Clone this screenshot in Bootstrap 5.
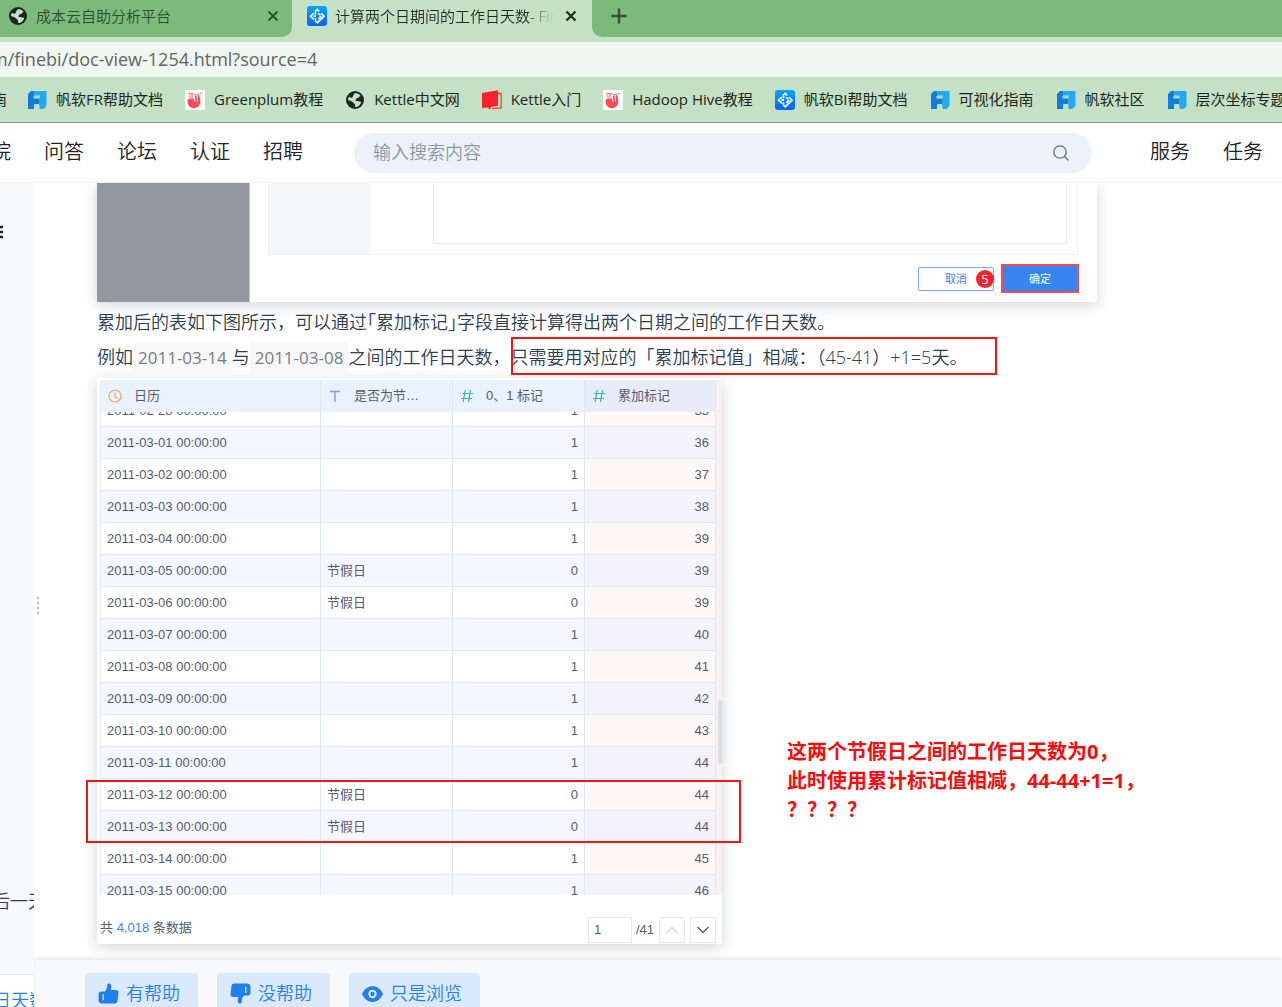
<!DOCTYPE html>
<html lang="zh-CN">
<head>
<meta charset="utf-8">
<meta name="viewport" content="width=device-width, initial-scale=1">
<title>计算两个日期间的工作日天数- FineBI</title>
<link href="https://cdn.jsdelivr.net/npm/bootstrap@5.3.0/dist/css/bootstrap.min.css" rel="stylesheet">
<style>
body{font-family:"Open Sans","Noto Sans CJK SC",sans-serif;font-weight:350;color:#2c3e50;background:#fff}
a{text-decoration:none;color:inherit}
.tabstrip{height:42px;background:#c5e1c5;font-size:15px;color:#1f2a20}
.tab-side{height:37px;background:#7abb7b}
.tab-idle{width:292px;border-bottom-right-radius:10px;color:#2f4a31;padding:0 12px 5px 8px}
.tab-rest{border-bottom-left-radius:10px;padding:0 18px 5px}
.tab-live{width:300px;height:37px;padding:0 14px 5px 15px}
.tab-title{width:219px;white-space:nowrap;overflow:hidden;-webkit-mask-image:linear-gradient(90deg,#000 90%,transparent);mask-image:linear-gradient(90deg,#000 90%,transparent)}
.tab-live svg{flex:none}
.plain{display:block;background:none;border:0;padding:0;line-height:0;color:inherit}
.addr{height:35px;background:#f0f7f0;font-size:18px;font-weight:400;color:#5f6661}
.addr input{background:none;border:0;padding:0;margin-left:-9px;width:100%;color:inherit;outline:0}
.marks{height:46px;background:#c5e1c5;border-bottom:1px solid #86a286;font-size:15px;font-weight:400;color:#1c261d;gap:22px;white-space:nowrap}
.marks a{gap:9px;flex:none}
.marks a:first-child{margin-left:-8px;margin-right:-2px}
.marks svg{flex:none}
.site{height:60px;border-bottom:1px solid #ebf1f8;font-size:20px;color:#222;background:#fff;padding-right:19px}
.links{gap:33px;padding-bottom:2px;white-space:nowrap}
.links-main{margin-left:-9px;margin-right:51px}
.links-user{margin-left:58px}
.search{height:40px;border-radius:20px;background:#edf2fa;padding:0 22px 0 19px}
.search input{background:none;border:0;outline:0;font-size:18px;font-weight:350;padding:0}
.search input::placeholder{color:#8796ab;opacity:1}
.side{width:34px;background:#f7f9fd;font-size:18px;white-space:nowrap}
.side-menu{padding-top:42px}
.side-item{margin-left:-8px;line-height:30px;margin-bottom:58px}
.side-now{margin-left:-7px;color:#1e80e8;line-height:30px;padding-top:10px}
.side-foot{height:33px;background:#fff;border-top:1px solid #e6e9ee}
.grip{width:12px;padding-top:68px}
.article{padding-left:51px}
.canvas{width:1000px;max-width:100%}
.lifted{background:#fff;box-shadow:0 3px 14px rgba(30,40,50,.2)}
.shot{height:119px}
.shot-mask{width:153px;background:#92969f;border-right:1px solid #c9cbd0}
.shot-panel{height:72px;margin:0 19px 0 18px;border:1px solid #eff0f2;border-top:0}
.shot-list{width:101px;background:#f5f6f8}
.shot-box{height:61px;margin:0 10px 0 63px;border:1px solid #e8e9eb;border-top:0}
.shot-actions{gap:7px;padding:9px 18px 0 0}
.shot-btn{display:block;font-size:11px;font-weight:400;line-height:1;padding:0}
.btn-no{width:76px;height:24px;border:1px solid #78aaf5;border-radius:2px;background:#fff;color:#3f82ee}
.btn-ok{width:78px;height:29px;border:2px solid #ef4b50;background:#3685f2;color:#fff}
.step{width:18px;height:18px;border-radius:9px;background:#f5222d;color:#fff;font-size:13px;font-weight:400;line-height:18px;text-align:center;right:0;top:3px}
.copy{font-size:18px;line-height:35px;margin:3px 0;white-space:nowrap}
.copy p{margin:0}
.quo{font-feature-settings:"halt"}
.datecode{font-family:"Open Sans",sans-serif;font-size:17px;font-weight:400;color:#757d86;background:#f8f8f8;padding:4px 5px}
.sheet{width:625px;height:566px;padding:2px 0 0 3px;font-size:13px;font-weight:400;color:#545b6b;font-family:"Liberation Sans","Noto Sans CJK SC",sans-serif}
.viewport{height:515px;overflow:hidden}
.data{width:616px;table-layout:fixed;border-collapse:separate;border-spacing:0}
.data th,.data td{height:32px;padding:0 6px;border-right:1px solid #dbe8fb;border-bottom:1px solid #dbe8fb;line-height:18px;font-weight:400}
.data th{position:sticky;top:0;background:#e9f2fe;border-bottom-color:#e9f2fe;z-index:1}
.data td:first-child,.data th:first-child{border-left:1px solid #e3ecf8}
.data tbody tr:nth-child(even) td{background:#f4f8fe}
.data td:nth-child(n+3){text-align:right}
.data td:nth-child(4){background:#fff8f8}
.data tbody tr:nth-child(even) td:nth-child(4){background:#f4f3f9}
.data th:nth-child(4){background:#e9ecf8}
.data th svg{margin-right:12px;margin-left:1px}
.rail{width:6px;background:#f7f1f2}
.thumb{width:4px;height:64px;border-radius:2px;background:#dedde2;margin-top:320px}
.pager{height:49px;padding:12px 6px 0 0}
.pager input,.pager button{height:26px;border:1px solid #e6e8ec;background:#fff;color:#545b6b;padding:0 5px}
.pager input{width:44px}
.pager button{width:26px;line-height:0;margin-left:5px}
.frame{position:absolute;border:2px solid #f41414;pointer-events:none}
.frame-a{left:414px;top:154px;width:486px;height:38px}
.frame-b{left:-11px;top:597px;width:655px;height:63px}
.note{position:absolute;left:690px;top:554px;font-size:20px;line-height:29px;font-weight:700;color:#f90b0b;white-space:nowrap}
.votes{height:47px;background:#f7f9fd;padding:13px 0 0 50px;gap:19px;box-shadow:0 -2px 4px rgba(0,0,0,.1);margin-left:1px}
.vote{height:44px;background:#dbe9fd;color:#1e80e8;font-size:18px;font-weight:350;border:0;border-radius:4px;padding:0 18px 3px 13px;gap:7px}
</style>
<script src="https://cdn.jsdelivr.net/npm/bootstrap@5.3.0/dist/js/bootstrap.bundle.min.js"></script>
</head>
<body>
<svg width="0" height="0" class="position-absolute" aria-hidden="true">
<defs>
<linearGradient id="bl" x1="0" y1="0" x2="0" y2="1"><stop offset="0" stop-color="#05a5ff"/><stop offset="1" stop-color="#0a62ff"/></linearGradient>
<symbol id="globe" viewBox="0 0 20 20"><circle cx="10" cy="10" r="9" fill="#1f2421"/><path d="M10 3.300c2.500-.6 4.500.8 5.600 2.700-1.200.2-1.600 1.800-3 2-1.300.2-1.300 1.200-2 1.800-.6.500.2 1.400 1.600 1.300 2-.1 2.800 1 4 1-.5 2.600-2.500 4.600-5 5-1.300.2-1.300-1-1.200-2 .2-1.500-1.200-1.500-1.800-2.600C7 11.200 5 10.500 3 10c0-1.500.4-2.400 1-3.300 1.300 1 2.500 1.500 3.500.6C8.500 6.400 8 4 10 3.300z" fill="#c5e1c5"/></symbol>
<symbol id="bi" viewBox="0 0 20 20"><rect width="20" height="20" rx="3" fill="url(#bl)"/><path d="M8.500 8.500V5L10.200 3.400 12.200 5.400M6.800 7 3.600 10.200 6.800 13.400M6.500 10.200H9M11.300 7.400 13.300 9.200M14.200 7.400 17 10.200 10.300 16.800 8.500 15V12.200M11.400 12.800 14 10.200" fill="none" stroke="#fff" stroke-width="1.700"/></symbol>
<symbol id="fr" viewBox="0 0 20 20"><path d="M4 1H7.500V19H1V4z" fill="#0a80dc"/><path d="M7.500 1H19.500V16L16.500 19H12.500V6.500H7.500z" fill="#22aaf0"/><path d="M6.500 8.500h6V15H8v4H4v-9z" fill="#0a80dc"/><path d="M7 8.500V6h6M7.500 19v-4.500h4.500" fill="none" stroke="#c5e1c5" stroke-width="1"/></symbol>
<symbol id="gp" viewBox="0 0 20 20"><rect width="20" height="20" fill="#fff"/><path d="M2.500 10C4 8 6 9 8 8.300c1 0 1 1.500 1.300 3 .3 1 1 .8 1-.2l-.3-4.800c.2-1.500 1.500-1.500 1.700 0l.3 5c.3.8 1 .7 1-.1l-.2-5.500c.5-1 1.600-.6 1.700.4l.8 4c.5 4-1.800 7.700-5.800 8.200C5.500 18.600 2 15 2.500 10z" fill="#fa4a55"/><circle cx="6" cy="6" r="2.600" fill="#fcaab0"/><path d="M3 3.500h5l3 1.500 6.500-2" fill="none" stroke="#fb8088" stroke-width="1"/><circle cx="5.500" cy="5.800" r=".7" fill="#fff"/></symbol>
<symbol id="bk" viewBox="0 0 20 20"><path d="M0 3 16 .3v15.500L9 17l-1 3-2-2.500-6 .5z" fill="#fa202c"/><path d="M16 3.500h3.200V18l-9.200.7" fill="none" stroke="#f23a40" stroke-width="1.300"/></symbol>
<symbol id="hash" viewBox="0 0 14 14"><path d="M5.200 1 3.200 13M10.500 1l-2 12M2 4.500h11M1 9.500h11" fill="none" stroke="#35b8a8" stroke-width="1.200"/></symbol>
<symbol id="up" viewBox="0 0 20 20"><path d="M6.500 8C8.500 6.500 8.600 4.500 8.800 2.200 9-.3 12.300-.3 12.600 2.500c.1 1.600-.2 3-.5 4.200H17c1.800 0 2.700 1.200 2.500 2.800L18.600 17c-.3 1.700-1 2.500-2.600 2.500H4C1.500 19.500.5 18.500.5 16v-5c0-2 1-3 3-3z" fill="#1e80e8"/><path d="M5 10.500v6" stroke="#dbe9fd" stroke-width="1.200"/></symbol>
</defs>
</svg>

<div class="vh-100 d-flex flex-column overflow-hidden">
<header class="flex-shrink-0">
  <div class="tabstrip d-flex">
    <div class="tab-side tab-idle d-flex align-items-center">
      <svg width="20" height="20" class="me-2"><use href="#globe"/></svg><span class="flex-grow-1">成本云自助分析平台</span>
      <button class="plain" aria-label="关闭标签页"><svg width="14" height="14" viewBox="0 0 14 14"><path d="M2.500 2.500l9 9M11.500 2.500l-9 9" stroke="currentColor" stroke-width="1.800"/></svg></button>
    </div>
    <div class="tab-live d-flex align-items-center">
      <svg width="20" height="20"><use href="#bi"/></svg><span class="tab-title ms-2">计算两个日期间的工作日天数- FineBI</span>
      <button class="plain ms-auto" aria-label="关闭标签页"><svg width="14" height="14" viewBox="0 0 14 14"><path d="M2.500 2.500l9 9M11.500 2.500l-9 9" stroke="currentColor" stroke-width="2.200"/></svg></button>
    </div>
    <div class="tab-side tab-rest flex-grow-1 d-flex align-items-center">
      <button class="plain" aria-label="新标签页"><svg width="18" height="18" viewBox="0 0 18 18"><path d="M9 1.500v15M1.500 9h15" stroke="#35503a" stroke-width="2.400"/></svg></button>
    </div>
  </div>
  <div class="addr d-flex align-items-center overflow-hidden"><input type="text" aria-label="地址" value="m/finebi/doc-view-1254.html?source=4"></div>
  <nav class="marks d-flex align-items-center overflow-hidden" aria-label="书签">
    <a href="#">南</a>
    <a href="#" class="d-flex align-items-center"><svg width="20" height="20"><use href="#fr"/></svg>帆软FR帮助文档</a>
    <a href="#" class="d-flex align-items-center"><svg width="20" height="20"><use href="#gp"/></svg>Greenplum教程</a>
    <a href="#" class="d-flex align-items-center"><svg width="20" height="20"><use href="#globe"/></svg>Kettle中文网</a>
    <a href="#" class="d-flex align-items-center"><svg width="20" height="20"><use href="#bk"/></svg>Kettle入门</a>
    <a href="#" class="d-flex align-items-center"><svg width="20" height="20"><use href="#gp"/></svg>Hadoop Hive教程</a>
    <a href="#" class="d-flex align-items-center"><svg width="20" height="20"><use href="#bi"/></svg>帆软BI帮助文档</a>
    <a href="#" class="d-flex align-items-center"><svg width="20" height="20"><use href="#fr"/></svg>可视化指南</a>
    <a href="#" class="d-flex align-items-center"><svg width="20" height="20"><use href="#fr"/></svg>帆软社区</a>
    <a href="#" class="d-flex align-items-center"><svg width="20" height="20"><use href="#fr"/></svg>层次坐标专题</a>
  </nav>
  <div class="site d-flex align-items-center overflow-hidden">
    <nav class="links links-main d-flex"><a href="#">院</a><a href="#">问答</a><a href="#">论坛</a><a href="#">认证</a><a href="#">招聘</a></nav>
    <form class="search d-flex align-items-center flex-grow-1">
      <input class="flex-grow-1" type="text" placeholder="输入搜索内容" aria-label="搜索">
      <button type="button" class="plain" aria-label="搜索"><svg width="18" height="18" viewBox="0 0 18 18" fill="none" stroke="#5d6f86" stroke-width="1.300"><circle cx="8" cy="8" r="6.200"/><path d="M12.500 12.500l4 4"/></svg></button>
    </form>
    <nav class="links links-user d-flex"><a href="#">服务</a><a href="#">任务</a></nav>
  </div>
</header>

<div class="flex-grow-1 d-flex overflow-hidden">
  <aside class="side flex-shrink-0 d-flex flex-column overflow-hidden">
    <div class="side-menu flex-grow-1"><button class="plain" aria-label="目录"><svg width="4" height="14" viewBox="0 0 4 14"><path d="M0 2h3M0 7h3M0 12h3" stroke="#222" stroke-width="2.400"/></svg></button></div>
    <a href="#" class="side-item">后一天</a>
    <div class="side-foot"><a href="#" class="side-now d-block">日天数</a></div>
  </aside>
  <div class="flex-grow-1 d-flex flex-column overflow-hidden">
    <div class="flex-grow-1 d-flex overflow-hidden">
      <div class="grip flex-shrink-0 d-flex align-items-center"><svg width="6" height="20" viewBox="0 0 6 20" fill="#b5b9c0"><circle cx="4" cy="2" r="1.200"/><circle cx="4" cy="7" r="1.200"/><circle cx="4" cy="12" r="1.200"/><circle cx="4" cy="17" r="1.200"/></svg></div>
      <main class="article flex-grow-1">
        <div class="canvas position-relative">
          <div class="shot lifted d-flex">
            <div class="shot-mask"></div>
            <div class="flex-grow-1">
              <div class="shot-panel d-flex"><div class="shot-list"></div><div class="shot-box flex-grow-1"></div></div>
              <div class="shot-actions d-flex justify-content-end align-items-center">
                <div class="position-relative"><button class="shot-btn btn-no">取消</button><span class="step position-absolute">5</span></div>
                <button class="shot-btn btn-ok">确定</button>
              </div>
            </div>
          </div>
          <div class="copy">
            <p>累加后的表如下图所示，可以通过<span class="quo">「累加标记」</span>字段直接计算得出两个日期之间的工作日天数。</p>
            <p>例如<span class="datecode">2011-03-14</span>与<span class="datecode">2011-03-08</span>之间的工作日天数，只需要用对应的「累加标记值」相减：（45-41）+1=5天。</p>
          </div>
          <div class="sheet lifted">
            <div class="d-flex viewport">
              <div class="viewport" id="rows">
              <table class="data">
                <colgroup><col style="width:221px"><col style="width:132px"><col style="width:132px"><col style="width:131px"></colgroup>
                <thead><tr>
                  <th scope="col"><svg width="14" height="14" viewBox="0 0 14 14" fill="none" stroke="#f5a860" stroke-width="1.200"><circle cx="7" cy="7" r="6"/><path d="M7 3.500V7.500l2.500 2"/></svg>日历</th>
                  <th scope="col"><svg width="14" height="14" viewBox="0 0 14 14"><path d="M2 2.500h10M7 2.500V13" stroke="#7c9cf2" stroke-width="1.400"/></svg>是否为节…</th>
                  <th scope="col"><svg width="14" height="14"><use href="#hash"/></svg>0、1 标记</th>
                  <th scope="col"><svg width="14" height="14"><use href="#hash"/></svg>累加标记</th>
                </tr></thead>
                <tbody>
                  <tr><td>2011-02-28 00:00:00</td><td></td><td>1</td><td>35</td></tr>
                  <tr><td>2011-03-01 00:00:00</td><td></td><td>1</td><td>36</td></tr>
                  <tr><td>2011-03-02 00:00:00</td><td></td><td>1</td><td>37</td></tr>
                  <tr><td>2011-03-03 00:00:00</td><td></td><td>1</td><td>38</td></tr>
                  <tr><td>2011-03-04 00:00:00</td><td></td><td>1</td><td>39</td></tr>
                  <tr><td>2011-03-05 00:00:00</td><td>节假日</td><td>0</td><td>39</td></tr>
                  <tr><td>2011-03-06 00:00:00</td><td>节假日</td><td>0</td><td>39</td></tr>
                  <tr><td>2011-03-07 00:00:00</td><td></td><td>1</td><td>40</td></tr>
                  <tr><td>2011-03-08 00:00:00</td><td></td><td>1</td><td>41</td></tr>
                  <tr><td>2011-03-09 00:00:00</td><td></td><td>1</td><td>42</td></tr>
                  <tr><td>2011-03-10 00:00:00</td><td></td><td>1</td><td>43</td></tr>
                  <tr><td>2011-03-11 00:00:00</td><td></td><td>1</td><td>44</td></tr>
                  <tr><td>2011-03-12 00:00:00</td><td>节假日</td><td>0</td><td>44</td></tr>
                  <tr><td>2011-03-13 00:00:00</td><td>节假日</td><td>0</td><td>44</td></tr>
                  <tr><td>2011-03-14 00:00:00</td><td></td><td>1</td><td>45</td></tr>
                  <tr><td>2011-03-15 00:00:00</td><td></td><td>1</td><td>46</td></tr>
                </tbody>
              </table>
              </div>
              <div class="rail d-flex justify-content-end"><div class="thumb"></div></div>
            </div>
            <div class="pager d-flex align-items-center mt-1">
              <span class="me-auto pb-1">共 <span style="color:#3f82ee">4,018</span> 条数据</span>
              <input type="text" value="1" aria-label="页码"><span class="ms-1">/41</span>
              <button aria-label="上一页"><svg width="14" height="10" viewBox="0 0 14 10" fill="none" stroke="#cfd4dc" stroke-width="1.300"><path d="M1.500 8 7 2.500 12.500 8"/></svg></button>
              <button aria-label="下一页"><svg width="14" height="10" viewBox="0 0 14 10" fill="none" stroke="#545b6b" stroke-width="1.300"><path d="M1.500 2 7 7.500 12.500 2"/></svg></button>
            </div>
          </div>
          <div class="frame frame-a"></div>
          <div class="frame frame-b"></div>
          <div class="note">这两个节假日之间的工作日天数为0，<br>此时使用累计标记值相减，44-44+1=1，<br>？？？？</div>
        </div>
      </main>
    </div>
    <div class="votes d-flex flex-shrink-0 position-relative">
      <button class="vote d-flex align-items-center"><svg width="21" height="21"><use href="#up"/></svg>有帮助</button>
      <button class="vote d-flex align-items-center"><svg width="21" height="21" viewBox="0 0 20 20"><g transform="rotate(180 10 10)"><use href="#up" width="20" height="20"/></g></svg>没帮助</button>
      <button class="vote d-flex align-items-center"><svg width="21" height="16" viewBox="0 0 21 16"><path d="M0 8C4.500-2.500 16.500-2.500 21 8 16.500 18.500 4.500 18.500 0 8z" fill="#1e80e8"/><circle cx="10.500" cy="8" r="4.200" fill="#dbe9fd"/><circle cx="10.500" cy="8" r="2.200" fill="#1e80e8"/></svg>只是浏览</button>
    </div>
  </div>
</div>
</div>
<script>
// start part of the way down the first row, under the fixed heading
document.getElementById('rows').scrollTop = 17;
</script>
</body>
</html>
